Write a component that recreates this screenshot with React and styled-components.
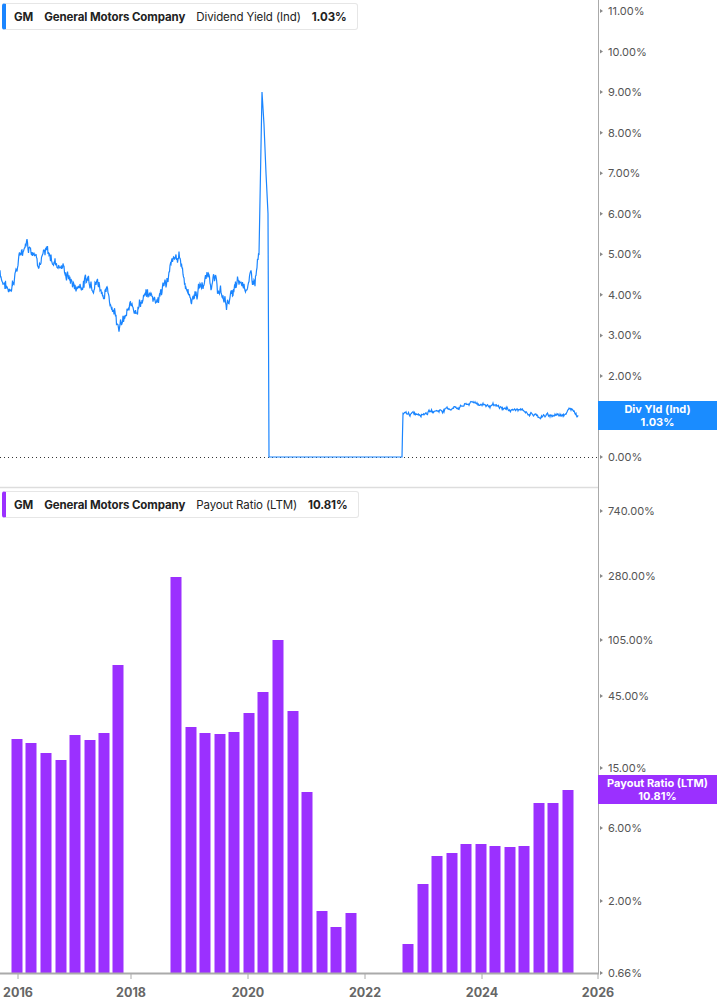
import React from "react";
import styled, { createGlobalStyle } from "styled-components";

const Global = createGlobalStyle`
  body { margin: 0; background: #fff; font-family: Inter, "Liberation Sans", sans-serif; }
`;

const PLOT_W = 598;

const rand = (seed) => {
  let s = seed;
  return () => {
    s = (s * 9301 + 49297) % 233280;
    return s / 233280;
  };
};

// anchor points for dividend yield (x px, value %)
const anchors = [
  [0, 4.6], [8, 4.1], [20, 4.9], [26, 5.4], [40, 5.0], [60, 4.8], [75, 4.2], [95, 4.5],
  [110, 3.9], [122, 3.3], [140, 3.9], [160, 4.0], [170, 4.6], [180, 4.9], [190, 3.9],
  [210, 4.5], [225, 3.8], [245, 4.3], [255, 4.3], [259, 5.0], [262, 9.0], [264, 8.2],
  [266, 7.0], [268, 6.0], [269, 0], [402, 0], [403, 1.0], [420, 1.1], [440, 1.15],
  [460, 1.25], [475, 1.35], [500, 1.2], [520, 1.15], [540, 1.0], [560, 1.05], [573, 1.2], [578, 1.03],
];

const yieldY = (v) => 457 - v * 40.55;

const buildYield = () => {
  const r = rand(7);
  const pts = [];
  let drift = 0;
  for (let i = 0; i < anchors.length - 1; i++) {
    const [x0, v0] = anchors[i];
    const [x1, v1] = anchors[i + 1];
    const steps = Math.max(1, Math.round((x1 - x0) * 2));
    for (let s = 0; s < steps; s++) {
      const t = s / steps;
      let v = v0 + (v1 - v0) * t;
      if (v > 0.2 && !(x0 >= 259 && x0 < 269)) {
        const amp = v > 2 ? 0.12 : 0.03;
        drift = drift * 0.85 + (r() - 0.5) * amp * 2;
        v += drift + (r() - 0.5) * amp;
      }
      pts.push([x0 + (x1 - x0) * t, v]);
    }
  }
  pts.push(anchors[anchors.length - 1]);
  return pts.map(([x, v]) => `${x.toFixed(1)},${yieldY(v).toFixed(1)}`).join(" ");
};

const yieldLabels = ["11.00%", "10.00%", "9.00%", "8.00%", "7.00%", "6.00%", "5.00%", "4.00%", "3.00%", "2.00%", "1.00%", "0.00%"];

const payoutLabels = [
  ["740.00%", 511], ["280.00%", 576], ["105.00%", 640], ["45.00%", 696],
  ["15.00%", 768], ["6.00%", 828], ["2.00%", 901],
];

const bars = [
  [17, 739], [31, 743], [46, 753], [61, 760], [75, 735], [90, 740], [104, 733], [118, 665],
  [176, 577], [191, 727], [205, 733], [220, 734], [234, 732], [249, 713], [263, 692], [278, 640],
  [293, 711], [307, 792], [322, 911], [336, 927], [351, 913],
  [408, 944], [423, 884], [437, 856], [452, 853], [466, 844], [481, 844], [495, 846], [510, 847],
  [524, 846], [539, 803], [553, 803], [568, 790],
];

const years = [[18, "2016"], [131, "2018"], [248, "2020"], [365, "2022"], [482, "2024"], [598, "2026"]];

const Page = styled.div`
  width: 717px;
  height: 1005px;
  position: relative;
  overflow: hidden;
`;

const Chart = styled.svg`
  display: block;
  position: absolute;
  inset: 0;
  text {
    font-family: Inter, "Liberation Sans", sans-serif;
  }
`;

const Legend = styled.div`
  position: absolute;
  left: 2px;
  top: ${(p) => p.$top}px;
  height: 27px;
  display: flex;
  align-items: center;
  gap: 11px;
  padding: 0 10px 0 8px;
  background: #fff;
  border: 1px solid #e6e6e6;
  border-left: 4px solid ${(p) => p.$color};
  border-radius: 3px;
  font-size: 11.5px;
  letter-spacing: -0.1px;
  color: #222;
  box-sizing: border-box;
`;

const Bold = styled.span`
  font-weight: 700;
`;

const Tag = styled.div`
  position: absolute;
  left: 598px;
  right: 0;
  top: ${(p) => p.$top}px;
  height: 29px;
  background: ${(p) => p.$color};
  color: #fff;
  font-size: 11px;
  font-weight: 700;
  line-height: 13px;
  display: flex;
  flex-direction: column;
  justify-content: center;
  align-items: center;
`;

export default function App() {
  const line = buildYield();
  return (
    <Page>
      <Global />
      <Chart width="717" height="1005">
        <line x1="0" y1="457.5" x2={PLOT_W} y2="457.5" stroke="#333" strokeDasharray="1 3" />
        <polyline points={line} fill="none" stroke="#1a85ff" strokeWidth="1.2" />
        {yieldLabels.map((l, i) => {
          const y = 11 + i * 40.55;
          return (
            <g key={l}>
              <path d={`M600 ${y - 2} L603 ${y} L600 ${y + 2}Z`} fill="#888" />
              <text x="608" y={y + 4} fontSize="11" fill="#555">{l}</text>
            </g>
          );
        })}
        <line x1="0" y1="487.5" x2={PLOT_W} y2="487.5" stroke="#ddd" strokeWidth="1.5" />
        {bars.map(([x, t], i) => (
          <rect key={i} x={x - 5.5} y={t} width="11" height={973 - t} fill="#9b30ff" />
        ))}
        {payoutLabels.map(([l, y]) => (
          <g key={l}>
            <path d={`M600 ${y - 2} L603 ${y} L600 ${y + 2}Z`} fill="#888" />
            <text x="608" y={y + 4} fontSize="11" fill="#555">{l}</text>
          </g>
        ))}
        <path d="M600 971 L603 973 L600 975Z" fill="#888" />
        <text x="608" y="977" fontSize="11" fill="#555">0.66%</text>
        <line x1="598.5" y1="0" x2="598.5" y2="974" stroke="#aaa" />
        <line x1="0" y1="973.5" x2="599" y2="973.5" stroke="#aaa" strokeWidth="2" />
        {years.map(([x, y]) => (
          <g key={y}>
            <line x1={x} y1="974" x2={x} y2="979" stroke="#aaa" />
            <text x={x} y="997" fontSize="12.5" fontWeight="700" fill="#666" textAnchor="middle">{y}</text>
          </g>
        ))}
      </Chart>
      <Legend $top={3} $color="#1a85ff">
        <Bold>GM</Bold>
        <Bold>General Motors Company</Bold>
        <span>Dividend Yield (Ind)</span>
        <Bold>1.03%</Bold>
      </Legend>
      <Legend $top={491} $color="#9b30ff">
        <Bold>GM</Bold>
        <Bold>General Motors Company</Bold>
        <span>Payout Ratio (LTM)</span>
        <Bold>10.81%</Bold>
      </Legend>
      <Tag $top={401} $color="#1a8cff">
        <span>Div Yld (Ind)</span>
        <span>1.03%</span>
      </Tag>
      <Tag $top={775} $color="#9b30ff">
        <span>Payout Ratio (LTM)</span>
        <span>10.81%</span>
      </Tag>
    </Page>
  );
}
